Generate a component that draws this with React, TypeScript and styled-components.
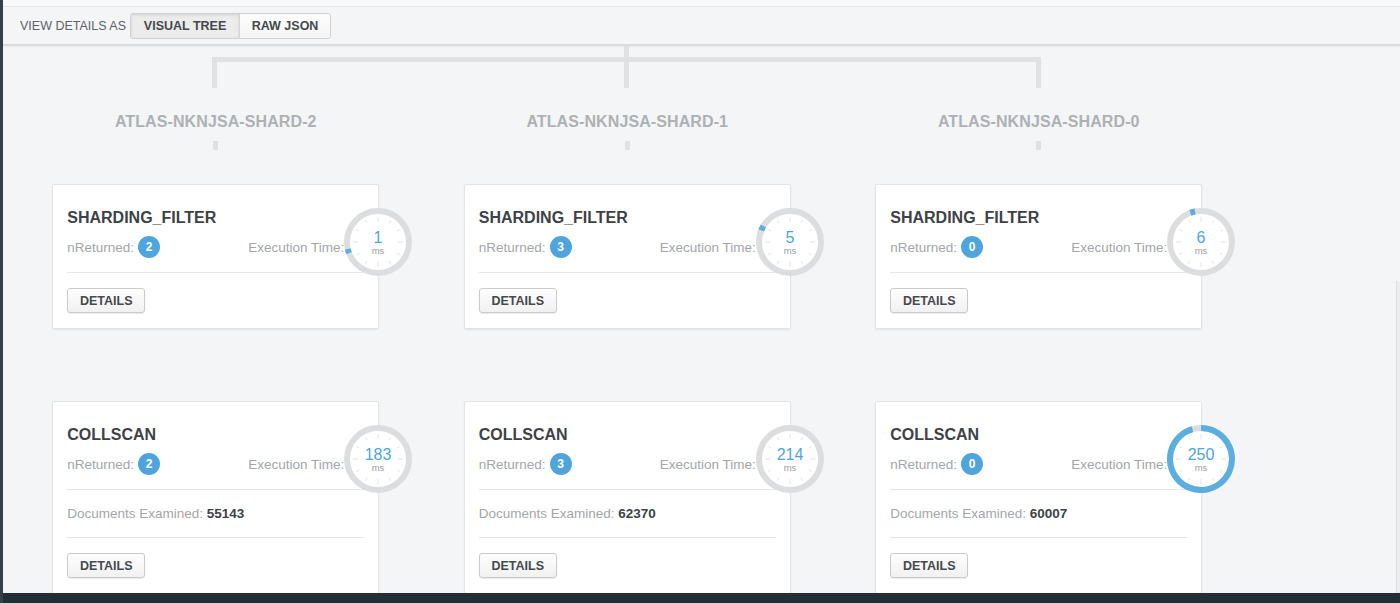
import styled, { createGlobalStyle } from 'styled-components';

const GlobalStyle = createGlobalStyle`
  html, body {
    margin: 0;
    padding: 0;
    background: #f4f5f6;
    font-family: 'Liberation Sans', Arial, sans-serif;
  }
`;

interface Stage {
  name: string;
  nReturned: number;
  time: number;
  arc: [number, number] | null; // degrees clockwise from 12 o'clock
  docsExamined?: number;
}

interface Shard {
  name: string;
  stages: Stage[];
}

const shards: Shard[] = [
  {
    name: 'ATLAS-NKNJSA-SHARD-2',
    stages: [
      { name: 'SHARDING_FILTER', nReturned: 2, time: 1, arc: [249, 257] },
      { name: 'COLLSCAN', nReturned: 2, time: 183, arc: null, docsExamined: 55143 },
    ],
  },
  {
    name: 'ATLAS-NKNJSA-SHARD-1',
    stages: [
      { name: 'SHARDING_FILTER', nReturned: 3, time: 5, arc: [292, 301] },
      { name: 'COLLSCAN', nReturned: 3, time: 214, arc: null, docsExamined: 62370 },
    ],
  },
  {
    name: 'ATLAS-NKNJSA-SHARD-0',
    stages: [
      { name: 'SHARDING_FILTER', nReturned: 0, time: 6, arc: [340, 349] },
      { name: 'COLLSCAN', nReturned: 0, time: 250, arc: [0, 344], docsExamined: 60007 },
    ],
  },
];

const R = 31;
const C = 34;

function point(deg: number) {
  const rad = ((deg - 90) * Math.PI) / 180;
  return [C + R * Math.cos(rad), C + R * Math.sin(rad)];
}

function arcPath(a: number, b: number) {
  const [x1, y1] = point(a);
  const [x2, y2] = point(b);
  const large = b - a > 180 ? 1 : 0;
  return `M ${x1} ${y1} A ${R} ${R} 0 ${large} 1 ${x2} ${y2}`;
}

function ClockFace({ time, arc }: { time: number; arc: [number, number] | null }) {
  const ticks = Array.from({ length: 12 }, (_, i) => i * 30);
  return (
    <ClockWrap>
      <svg width="68" height="68" viewBox="0 0 68 68">
        <circle cx={C} cy={C} r={R} fill="#fff" stroke="#dcdddf" strokeWidth="6" />
        {arc && <path d={arcPath(arc[0], arc[1])} fill="none" stroke="#5aaee0" strokeWidth="6" />}
        {ticks.map(deg => {
          const rad = ((deg - 90) * Math.PI) / 180;
          const long = deg % 90 === 0;
          const r1 = long ? 20 : 22;
          const r2 = 25;
          return (
            <line
              key={deg}
              x1={C + r1 * Math.cos(rad)}
              y1={C + r1 * Math.sin(rad)}
              x2={C + r2 * Math.cos(rad)}
              y2={C + r2 * Math.sin(rad)}
              stroke="#e2e2e2"
              strokeWidth="1"
            />
          );
        })}
        <text x={C} y={C + 1} textAnchor="middle" fontSize="16" fill="#4ca5dd" fontFamily="'Liberation Sans', Arial, sans-serif">
          {time}
        </text>
        <text x={C} y={C + 12} textAnchor="middle" fontSize="9.5" fill="#9a9da0" fontFamily="'Liberation Sans', Arial, sans-serif">
          ms
        </text>
      </svg>
    </ClockWrap>
  );
}

function StageCard({ stage, first }: { stage: Stage; first: boolean }) {
  return (
    <Card $first={first}>
      <StageTitle>{stage.name}</StageTitle>
      <StatsRow>
        <Stat>
          nReturned: <Badge>{stage.nReturned}</Badge>
        </Stat>
        <Stat>Execution Time:</Stat>
      </StatsRow>
      <ClockFace time={stage.time} arc={stage.arc} />
      <Divider />
      {stage.docsExamined !== undefined && (
        <>
          <DocsRow>
            Documents Examined: <strong>{stage.docsExamined}</strong>
          </DocsRow>
          <Divider />
        </>
      )}
      <DetailsButton>DETAILS</DetailsButton>
    </Card>
  );
}

export default function App() {
  return (
    <Page>
      <GlobalStyle />
      <TopStrip />
      <Toolbar>
        <ToolbarLabel>VIEW DETAILS AS</ToolbarLabel>
        <ToggleGroup>
          <ToggleButton $active $width={108}>VISUAL TREE</ToggleButton>
          <ToggleButton $width={90}>RAW JSON</ToggleButton>
        </ToggleGroup>
      </Toolbar>
      <Tree>
        <Main>
          <Connector>
            <Stem />
            <Bracket>
              <InnerStem />
            </Bracket>
          </Connector>
          <Columns>
            {shards.map(shard => (
              <Column key={shard.name}>
                <ShardLabel>{shard.name}</ShardLabel>
                <Tick />
                {shard.stages.map((stage, i) => (
                  <StageCard key={stage.name} stage={stage} first={i === 0} />
                ))}
              </Column>
            ))}
          </Columns>
        </Main>
        <EdgePanel />
      </Tree>
      <BottomBar />
    </Page>
  );
}

const Page = styled.div`
  width: 1400px;
  height: 603px;
  box-sizing: border-box;
  border-left: 3px solid #33404a;
  display: flex;
  flex-direction: column;
  overflow: hidden;
  background: #f4f5f6;
`;

const TopStrip = styled.div`
  height: 6px;
  flex-shrink: 0;
  background: #f8f9fa;
  border-bottom: 1px solid #e6e8ea;
`;

const Toolbar = styled.div`
  height: 37px;
  flex-shrink: 0;
  display: flex;
  align-items: center;
  gap: 4px;
  padding-left: 17px;
  border-bottom: 2px solid #d9dbdd;
  box-shadow: 0 1px 2px rgba(0, 0, 0, 0.05);
`;

const ToolbarLabel = styled.span`
  font-size: 12.5px;
  color: #5d6268;
`;

const ToggleGroup = styled.div`
  display: flex;
  border: 1px solid #cfd1d3;
  border-radius: 3px;
  overflow: hidden;
`;

const ToggleButton = styled.div<{ $active?: boolean; $width: number }>`
  width: ${p => p.$width}px;
  height: 24px;
  display: flex;
  align-items: center;
  justify-content: center;
  font-size: 12.5px;
  font-weight: bold;
  color: #45494d;
  background: ${p => (p.$active ? '#ececec' : 'linear-gradient(#fdfdfd, #f5f5f5)')};
  box-shadow: ${p => (p.$active ? 'inset 0 1px 3px rgba(0,0,0,0.12)' : 'none')};
  border-right: 1px solid #d6d6d6;

  &:last-child {
    border-right: none;
  }
`;

const Tree = styled.div`
  flex: 1;
  display: flex;
  overflow: hidden;
`;

const Main = styled.div`
  flex: 1;
`;

const EdgePanel = styled.div`
  width: 3px;
  margin-top: 235px;
  background: #eceef0;
  border-left: 1px solid #dcdee0;
`;

const Connector = styled.div`
  margin-left: 209px;
  width: 829px;
  display: flex;
  flex-direction: column;
  align-items: center;
`;

const Stem = styled.div`
  width: 5px;
  height: 11px;
  background: #dfe1e3;
`;

const Bracket = styled.div`
  box-sizing: border-box;
  width: 829px;
  height: 31px;
  border: 5px solid #dfe1e3;
  border-bottom: none;
  display: flex;
  justify-content: center;
`;

const InnerStem = styled.div`
  width: 5px;
  background: #dfe1e3;
`;

const Columns = styled.div`
  display: grid;
  grid-template-columns: repeat(3, 411.5px);
  padding-left: 7px;
`;

const Column = styled.div`
  display: flex;
  flex-direction: column;
  align-items: center;
`;

const ShardLabel = styled.div`
  margin-top: 25px;
  font-size: 16px;
  line-height: 18px;
  font-weight: bold;
  letter-spacing: 0.1px;
  color: #adb1b5;
`;

const Tick = styled.div`
  margin-top: 10px;
  width: 5px;
  height: 9px;
  background: #dfe1e3;
`;

const Card = styled.div<{ $first: boolean }>`
  position: relative;
  box-sizing: border-box;
  width: 327px;
  margin-top: ${p => (p.$first ? '34px' : '72px')};
  padding: 23px 14px 15px;
  background: #fff;
  border: 1px solid #e3e4e5;
  border-radius: 2px;
  box-shadow: 0 1px 2px rgba(0, 0, 0, 0.07);
`;

const StageTitle = styled.div`
  font-size: 16px;
  line-height: 20px;
  font-weight: bold;
  color: #3e4246;
`;

const StatsRow = styled.div`
  margin-top: 8px;
  height: 22px;
  display: flex;
  align-items: center;
  justify-content: space-between;
  padding-right: 20px;
`;

const Stat = styled.span`
  display: flex;
  align-items: center;
  gap: 4px;
  font-size: 13.5px;
  color: #a3a6a9;
`;

const Badge = styled.span`
  width: 22px;
  height: 22px;
  border-radius: 50%;
  background: #4ea5dd;
  color: #fff;
  font-size: 12px;
  font-weight: bold;
  display: flex;
  align-items: center;
  justify-content: center;
`;

const ClockWrap = styled.div`
  position: absolute;
  left: 291px;
  top: 23px;
  width: 68px;
  height: 68px;

  svg {
    display: block;
  }
`;

const Divider = styled.div`
  height: 1px;
  background: #e6e7e8;
  margin: 14px 0 15px;
`;

const DocsRow = styled.div`
  margin-top: 16px;
  margin-bottom: 15px;
  font-size: 13.5px;
  line-height: 16px;
  color: #a3a6a9;

  strong {
    color: #3e4246;
  }
`;

const DetailsButton = styled.div`
  box-sizing: border-box;
  width: 78px;
  height: 25px;
  display: flex;
  align-items: center;
  justify-content: center;
  font-size: 12.5px;
  font-weight: bold;
  color: #45494d;
  border: 1px solid #c9cacc;
  border-radius: 3px;
  background: linear-gradient(#fefefe, #f1f1f1);
  box-shadow: 0 1px 1px rgba(0, 0, 0, 0.08);
`;

const BottomBar = styled.div`
  height: 10px;
  flex-shrink: 0;
  background: #232e37;
`;
